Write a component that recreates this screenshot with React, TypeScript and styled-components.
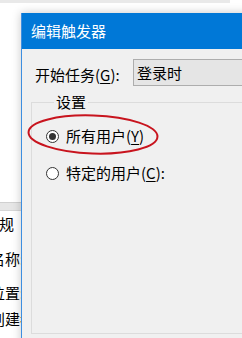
import React from "react";
import styled, { createGlobalStyle } from "styled-components";

const Global = createGlobalStyle`
  html, body { margin: 0; padding: 0; overflow: hidden; background: #fff; }
  * { box-sizing: border-box; }
`;

const FONT = `"Microsoft YaHei UI", "Noto Sans CJK SC", "Noto Sans", sans-serif`;

const Desktop = styled.div`
  position: relative;
  width: 242px;
  height: 338px;
  overflow: hidden;
  background: #ffffff;
  font-family: ${FONT};
  font-size: 15px;
  color: #000;
`;

const BackWindow = styled.div`
  position: absolute;
  left: -10px;
  top: 0;
  width: 240px;
  height: 338px;
  background: #ffffff;
  display: flex;
  flex-direction: column;
`;

const TopStrip = styled.div`
  height: 3px;
  background: #e9e9e9;
`;

const Band = styled.div`
  margin-top: 199px;
  height: 9px;
  background: #e6e6e6;
  border-top: 1px solid #d0d0d0;
  border-bottom: 1px solid #d6d6d6;
`;

const TabLabel = styled.div`
  height: 26px;
  line-height: 26px;
  margin-left: -6px;
  white-space: nowrap;
`;

const FieldLabel = styled.div<{ $gap: number }>`
  height: 20px;
  line-height: 20px;
  margin-top: ${(p) => p.$gap}px;
  white-space: nowrap;
`;

const Dialog = styled.div`
  position: absolute;
  left: 21px;
  top: 13px;
  width: 240px;
  height: 340px;
  background: #f0f0f0;
  border-left: 1px solid #3d8ee0;
  box-shadow: 0 0 9px rgba(0, 0, 0, 0.22);
  display: flex;
  flex-direction: column;
`;

const TitleBar = styled.div`
  height: 36px;
  line-height: 36px;
  background: #0078d7;
  color: #ffffff;
  padding-left: 9px;
  white-space: nowrap;
`;

const Body = styled.div`
  flex: 1;
  padding-top: 10px;
  display: flex;
  flex-direction: column;
`;

const StartRow = styled.div`
  display: flex;
  align-items: center;
  height: 27px;
`;

const RowLabel = styled.div`
  width: 111px;
  flex: none;
  padding-left: 13px;
  padding-top: 3px;
  white-space: nowrap;
`;

const Combo = styled.div`
  flex: 1;
  height: 27px;
  line-height: 25px;
  border: 1px solid #adadad;
  border-right: none;
  background: #e5e5e5;
  padding-left: 3px;
  white-space: nowrap;
`;

const Key = styled.span`
  text-decoration: underline;
  text-underline-offset: 2px;
`;

const Group = styled.fieldset`
  margin: 6px 0 0 9px;
  padding: 0 0 0 14px;
  height: 242px;
  border: 1px solid #dcdcdc;
  border-right: none;
  min-width: 0;
  display: flex;
  flex-direction: column;
`;

const Legend = styled.legend`
  margin-left: 8px;
  padding: 0 2px;
  height: 20px;
  line-height: 20px;
`;

const RadioRow = styled.label<{ $gap: number }>`
  display: flex;
  align-items: center;
  gap: 7px;
  height: 20px;
  margin-top: ${(p) => p.$gap}px;
  white-space: nowrap;
`;

const RadioCircle = styled.span<{ $checked?: boolean }>`
  width: 13px;
  height: 13px;
  flex: none;
  border-radius: 50%;
  border: 1px solid #333333;
  background: #ffffff;
  display: flex;
  align-items: center;
  justify-content: center;
  &::after {
    content: "";
    width: 7px;
    height: 7px;
    border-radius: 50%;
    background: ${(p) => (p.$checked ? "#333333" : "transparent")};
  }
`;

const RadioText = styled.span`
  line-height: 20px;
`;

const Annotation = styled.svg`
  position: absolute;
  left: 0;
  top: 0;
  width: 242px;
  height: 338px;
  pointer-events: none;
`;

export default function App() {
  return (
    <>
      <Global />
      <Desktop>
        <BackWindow>
          <TopStrip />
          <Band />
          <TabLabel>常规</TabLabel>
          <FieldLabel $gap={12}>名称:</FieldLabel>
          <FieldLabel $gap={14}>位置:</FieldLabel>
          <FieldLabel $gap={6}>创建者:</FieldLabel>
        </BackWindow>
        <Dialog>
          <TitleBar>编辑触发器</TitleBar>
          <Body>
            <StartRow>
              <RowLabel>
                开始任务(<Key>G</Key>):
              </RowLabel>
              <Combo>登录时</Combo>
            </StartRow>
            <Group>
              <Legend>设置</Legend>
              <RadioRow $gap={14}>
                <RadioCircle $checked />
                <RadioText>
                  所有用户(<Key>Y</Key>)
                </RadioText>
              </RadioRow>
              <RadioRow $gap={17}>
                <RadioCircle />
                <RadioText>
                  特定的用户(<Key>C</Key>):
                </RadioText>
              </RadioRow>
            </Group>
          </Body>
        </Dialog>
        <Annotation viewBox="0 0 242 338">
          <ellipse
            cx="93"
            cy="134.5"
            rx="64.5"
            ry="19"
            fill="none"
            stroke="#c8141e"
            strokeWidth="2"
            transform="rotate(2 93 134.5)"
          />
        </Annotation>
      </Desktop>
    </>
  );
}
